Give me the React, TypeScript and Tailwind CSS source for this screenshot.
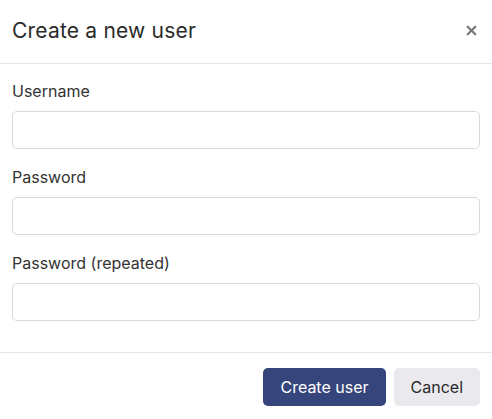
import { X } from "lucide-react";

interface FieldProps {
    label: string;
    type?: string;
}

function Field({ label, type = "text" }: FieldProps) {
    return (
        <div className="flex flex-col">
            <label className="text-[16px] leading-[22px] text-[#333] mb-[9px]">{label}</label>
            <input type={type} className="h-[38px] w-full rounded-[5px] border border-[#d9d9d9] bg-white px-3 outline-none" />
        </div>
    );
}

export default function App() {
    return (
        <div className="w-[492px] h-[419px] bg-white font-['Inter',sans-serif] text-[#333] flex flex-col">
            <div className="h-[64px] flex items-center justify-between pl-3 pr-[13px] border-b border-[#e6e6e6]">
                <h2 className="text-[21px] text-[#2b2b2b] tracking-[0.2px] pb-[2px]">Create a new user</h2>
                <button type="button" className="text-[#777] pb-[2px]">
                    <X size={15} strokeWidth={3.5} />
                </button>
            </div>
            <div className="flex flex-col gap-[17px] px-3 pt-[16px] pb-[31px] border-b border-[#e6e6e6]">
                <Field label="Username" />
                <Field label="Password" type="password" />
                <Field label="Password (repeated)" type="password" />
            </div>
            <div className="flex justify-end gap-2 px-3 pt-[15px]">
                <button type="button" className="h-[38px] px-[17px] rounded-[5px] bg-[#36457b] text-white text-[16px]">Create user</button>
                <button type="button" className="h-[38px] px-[17px] rounded-[5px] bg-[#e9e9ee] text-[#2b2b2b] text-[16px]">Cancel</button>
            </div>
        </div>
    );
}
